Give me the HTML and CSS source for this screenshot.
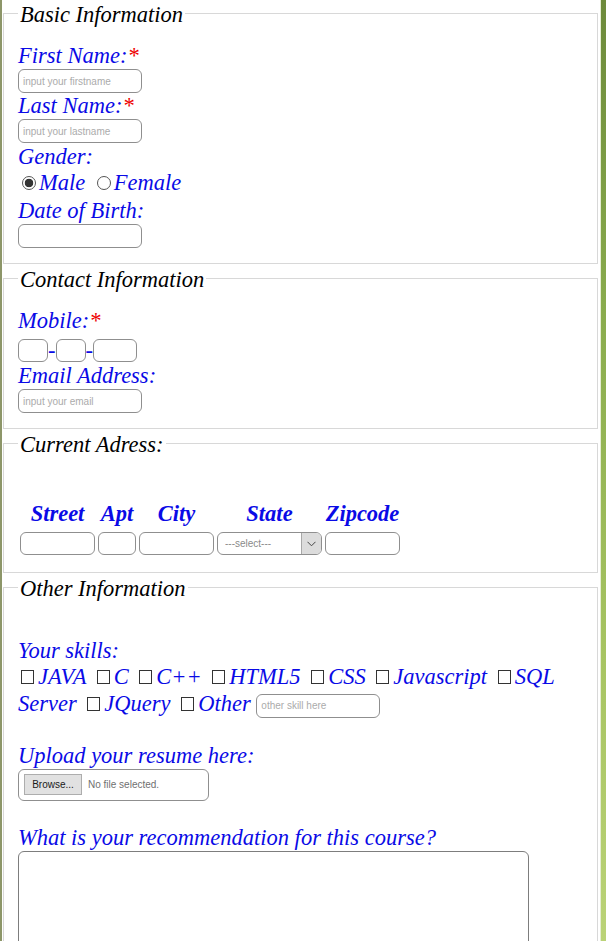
FILE: index.html
```html
<!DOCTYPE html>
<html lang="en">
<head>
<meta charset="utf-8">
<title>Registration Form</title>
<link rel="stylesheet" href="styles.css">
</head>
<body>
<div class="page">
  <form class="sheet">
    <fieldset class="group">
      <legend>Basic Information</legend>
      <label class="lbl">First Name:<span class="req">*</span></label>
      <input class="field" type="text" placeholder="input your firstname">
      <label class="lbl">Last Name:<span class="req">*</span></label>
      <input class="field" type="text" placeholder="input your lastname">
      <label class="lbl lbl-gender">Gender:</label>
      <div class="choice"><input class="radio" type="radio" name="g" checked>Male <input class="radio radio-second" type="radio" name="g">Female</div>
      <label class="lbl lbl-dob">Date of Birth:</label>
      <input class="field" type="text">
    </fieldset>

    <fieldset class="group">
      <legend>Contact Information</legend>
      <label class="lbl">Mobile:<span class="req">*</span></label>
      <div class="phone">
        <input class="field tel tel-s" type="text"><span class="dash">-</span><input class="field tel tel-s" type="text"><span class="dash">-</span><input class="field tel tel-l" type="text">
      </div>
      <label class="lbl lbl-email">Email Address:</label>
      <input class="field" type="text" placeholder="input your email">
    </fieldset>

    <fieldset class="group">
      <legend>Current Adress:</legend>
      <div class="addr">
        <span class="addr-head">Street</span>
        <span class="addr-head">Apt</span>
        <span class="addr-head">City</span>
        <span class="addr-head">State</span>
        <span class="addr-head">Zipcode</span>
        <input class="field cell" type="text">
        <input class="field cell" type="text">
        <input class="field cell" type="text">
        <div class="select">
          <select class="select-input"><option>---select---</option></select>
          <span class="select-btn"><svg width="9" height="6" viewBox="0 0 9 6"><polyline points="0.5,0.8 4.5,4.8 8.5,0.8" fill="none" stroke="#444" stroke-width="1"/></svg></span>
        </div>
        <input class="field cell" type="text">
      </div>
    </fieldset>

    <fieldset class="group group-last">
      <legend>Other Information</legend>
      <label class="lbl lbl-skills">Your skills:</label>
      <div class="skills"><input class="check check-first" type="checkbox">JAVA <input class="check" type="checkbox">C <input class="check" type="checkbox">C++ <input class="check" type="checkbox">HTML5 <input class="check" type="checkbox">CSS <input class="check" type="checkbox">Javascript <input class="check" type="checkbox">SQL Server <input class="check" type="checkbox">JQuery <input class="check" type="checkbox">Other <input class="field field-inline" type="text" placeholder="other skill here"></div>
      <label class="lbl lbl-upload">Upload your resume here:</label>
      <div class="file"><span class="browse">Browse...</span><span class="nofile">No file selected.</span></div>
      <label class="lbl lbl-rec">What is your recommendation for this course?</label>
      <textarea class="comments"></textarea>
    </fieldset>
  </form>
  <div class="strip"></div>
</div>
</body>
</html>
```

FILE: styles.css
```css
* {
  box-sizing: border-box;
}

html {
  overflow: hidden;
}

body {
  margin: 0;
  background: #fff;
  font-family: "Liberation Serif", "Times New Roman", serif;
}

.page {
  display: flex;
  min-height: 100vh;
}

.sheet {
  flex: none;
  width: 600px;
  margin: 0;
  padding: 0 2px 0 1px;
  border-left: 2px solid #8d9669;
  background: #fff;
}

.strip {
  flex: 1;
  border-left: 1px solid #e4ecd2;
  background: linear-gradient(#6d8a3b, #89ab4d 30%, #a7c462 65%, #bfd67c);
}

.group {
  min-width: 0;
  margin: 1px 0 0;
  padding: 16px 14px 15px;
  border: 1px solid #d8d8d8;
}

.group:first-child {
  margin-top: 0;
}

.group legend {
  padding: 2px 2px 0;
  font-size: 22.5px;
  line-height: 25px;
  font-style: italic;
  color: #000;
}

.lbl {
  display: block;
  font-size: 22.5px;
  line-height: 25px;
  font-style: italic;
  color: #0a0ae6;
}

.req {
  color: #ee0000;
}

.lbl-gender {
  margin-top: 1px;
}

.lbl-dob {
  margin-top: 2px;
}

.lbl-email {
  margin-top: 1px;
}

.lbl-skills {
  margin-top: 21px;
}

.lbl-upload {
  margin-top: 25px;
}

.lbl-rec {
  margin-top: 24px;
}

.field {
  display: block;
  width: 124px;
  height: 24px;
  margin: 1px 0 0;
  padding: 0 4px;
  border: 1px solid #8f8f8f;
  border-radius: 6px;
  background: #fff;
  font: 10px "Liberation Sans", Arial, sans-serif;
  color: #333;
}

.field::placeholder {
  color: #ababab;
}

.choice {
  font-size: 22.5px;
  line-height: 27px;
  font-style: italic;
  color: #0a0ae6;
}

.radio {
  appearance: none;
  width: 14px;
  height: 14px;
  margin: 0 3px 0 4px;
  border: 1px solid #555;
  border-radius: 50%;
  background: #fff;
  vertical-align: baseline;
}

.radio:checked {
  background: radial-gradient(circle, #333 0 4px, #fff 4.6px);
}

.radio-second {
  margin-left: 6px;
}

.phone {
  display: flex;
  align-items: center;
  height: 23px;
  margin-top: 6px;
}

.tel {
  height: 23px;
  margin: 0;
}

.tel-s {
  width: 30px;
}

.tel-l {
  width: 44px;
}

.dash {
  font-size: 22.5px;
  line-height: 23px;
  font-style: italic;
  color: #0a0ae6;
}

.addr {
  display: grid;
  grid-template-columns: 75px 38px 75px 105px 75px;
  column-gap: 3px;
  row-gap: 6px;
  margin: 28px 0 2px 2px;
}

.addr-head {
  font-size: 22.5px;
  line-height: 25px;
  font-weight: bold;
  font-style: italic;
  color: #0a0ae6;
  text-align: center;
}

.cell {
  width: 100%;
  height: 23px;
  margin: 0;
}

.select {
  display: flex;
  height: 23px;
  border: 1px solid #8f8f8f;
  border-radius: 6px;
  overflow: hidden;
  background: #fff;
}

.select-input {
  flex: 1;
  min-width: 0;
  appearance: none;
  border: 0;
  padding: 0 0 0 7px;
  background: transparent;
  font: 10px "Liberation Sans", Arial, sans-serif;
  color: #8a8a8a;
}

.select-btn {
  display: flex;
  align-items: center;
  justify-content: center;
  width: 20px;
  border-left: 1px solid #a8a8a8;
  background: #dcdcdc;
}

.skills {
  font-size: 22.5px;
  line-height: 27px;
  font-style: italic;
  color: #0a0ae6;
}

.check {
  appearance: none;
  width: 13px;
  height: 14px;
  margin: 0 4px 0 5px;
  border: 1px solid #333;
  border-radius: 0;
  background: #fff;
  vertical-align: baseline;
}

.check-first {
  margin-left: 3px;
}

.field-inline {
  display: inline-block;
  margin: 0;
  vertical-align: middle;
}

.file {
  display: flex;
  align-items: center;
  gap: 6px;
  width: 191px;
  height: 32px;
  margin-top: 1px;
  padding: 0 5px;
  border: 1px solid #8f8f8f;
  border-radius: 6px;
  font: 10px "Liberation Sans", Arial, sans-serif;
}

.browse {
  display: flex;
  align-items: center;
  justify-content: center;
  width: 58px;
  height: 21px;
  border: 1px solid #adadad;
  background: #e1e1e1;
  color: #1a1a1a;
}

.nofile {
  color: #707070;
}

.comments {
  display: block;
  width: 511px;
  height: 140px;
  margin-top: 1px;
  border: 1px solid #7d7d7d;
  border-radius: 6px;
  resize: none;
}
```
